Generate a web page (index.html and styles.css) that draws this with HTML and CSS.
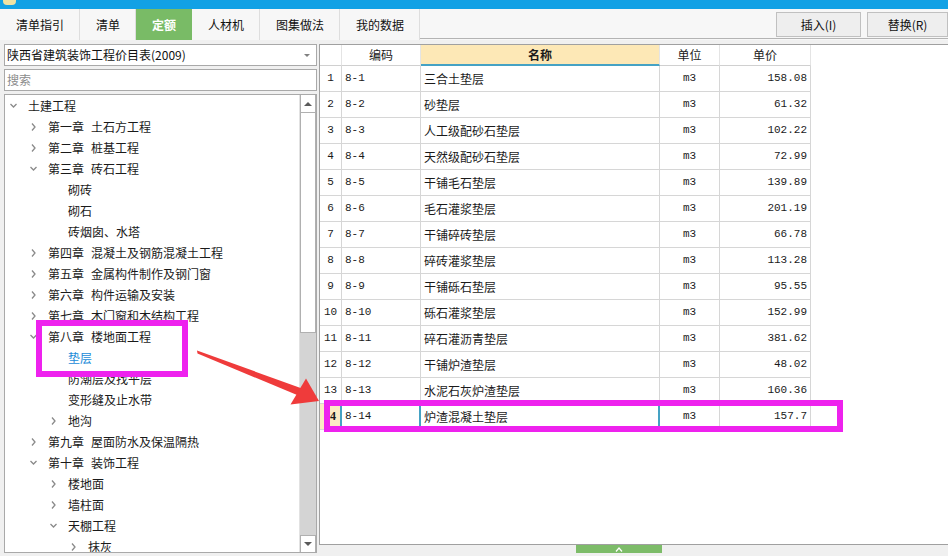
FILE: index.html
```html
<!DOCTYPE html>
<html lang="zh-CN">
<head>
<meta charset="utf-8">
<title>定额</title>
<link rel="stylesheet" href="styles.css">
</head>
<body>
<div class="titlebar"><span class="appicon"></span></div>
<div class="toolbar">
  <div class="tabs">
    <div class="tab">清单指引</div>
    <div class="tab">清单</div>
    <div class="tab active">定额</div>
    <div class="tab">人材机</div>
    <div class="tab">图集做法</div>
    <div class="tab">我的数据</div>
  </div>
  <div class="actions">
    <button class="btn btn-insert">插入(I)</button>
    <button class="btn btn-replace">替换(R)</button>
  </div>
</div>
<div class="main">
  <div class="left">
    <div class="select"><span>陕西省建筑装饰工程价目表(2009)</span><span class="caret"></span></div>
    <div class="search">搜索</div>
    <div class="tree">
      <div class="tree-list">
        <div class="node l0"><span class="chev"><svg viewBox="0 0 8 8"><polyline points="0.5,2 3.5,5 6.5,2"/></svg></span>土建工程</div>
        <div class="node l1"><span class="chev"><svg viewBox="0 0 8 8"><polyline points="2,0.5 5,4 2,7.5"/></svg></span><span class="ch">第一章</span>土石方工程</div>
        <div class="node l1"><span class="chev"><svg viewBox="0 0 8 8"><polyline points="2,0.5 5,4 2,7.5"/></svg></span><span class="ch">第二章</span>桩基工程</div>
        <div class="node l1"><span class="chev"><svg viewBox="0 0 8 8"><polyline points="0.5,2 3.5,5 6.5,2"/></svg></span><span class="ch">第三章</span>砖石工程</div>
        <div class="node l2"><span class="chev"></span>砌砖</div>
        <div class="node l2"><span class="chev"></span>砌石</div>
        <div class="node l2"><span class="chev"></span>砖烟囱、水塔</div>
        <div class="node l1"><span class="chev"><svg viewBox="0 0 8 8"><polyline points="2,0.5 5,4 2,7.5"/></svg></span><span class="ch">第四章</span>混凝土及钢筋混凝土工程</div>
        <div class="node l1"><span class="chev"><svg viewBox="0 0 8 8"><polyline points="2,0.5 5,4 2,7.5"/></svg></span><span class="ch">第五章</span>金属构件制作及钢门窗</div>
        <div class="node l1"><span class="chev"><svg viewBox="0 0 8 8"><polyline points="2,0.5 5,4 2,7.5"/></svg></span><span class="ch">第六章</span>构件运输及安装</div>
        <div class="node l1"><span class="chev"><svg viewBox="0 0 8 8"><polyline points="2,0.5 5,4 2,7.5"/></svg></span><span class="ch">第七章</span>木门窗和木结构工程</div>
        <div class="node l1"><span class="chev"><svg viewBox="0 0 8 8"><polyline points="0.5,2 3.5,5 6.5,2"/></svg></span><span class="ch">第八章</span>楼地面工程</div>
        <div class="node l2 selected"><span class="chev"></span>垫层</div>
        <div class="node l2"><span class="chev"></span>防潮层及找平层</div>
        <div class="node l2"><span class="chev"></span>变形缝及止水带</div>
        <div class="node l2"><span class="chev"><svg viewBox="0 0 8 8"><polyline points="2,0.5 5,4 2,7.5"/></svg></span>地沟</div>
        <div class="node l1"><span class="chev"><svg viewBox="0 0 8 8"><polyline points="2,0.5 5,4 2,7.5"/></svg></span><span class="ch">第九章</span>屋面防水及保温隔热</div>
        <div class="node l1"><span class="chev"><svg viewBox="0 0 8 8"><polyline points="0.5,2 3.5,5 6.5,2"/></svg></span><span class="ch">第十章</span>装饰工程</div>
        <div class="node l2"><span class="chev"><svg viewBox="0 0 8 8"><polyline points="2,0.5 5,4 2,7.5"/></svg></span>楼地面</div>
        <div class="node l2"><span class="chev"><svg viewBox="0 0 8 8"><polyline points="2,0.5 5,4 2,7.5"/></svg></span>墙柱面</div>
        <div class="node l2"><span class="chev"><svg viewBox="0 0 8 8"><polyline points="0.5,2 3.5,5 6.5,2"/></svg></span>天棚工程</div>
        <div class="node l3"><span class="chev"><svg viewBox="0 0 8 8"><polyline points="2,0.5 5,4 2,7.5"/></svg></span>抹灰</div>
      </div>
      <div class="scrollbar">
        <div class="sb-btn"><span class="tri-up"></span></div>
        <div class="sb-thumb"></div>
        <div class="sb-track"></div>
        <div class="sb-btn sb-down"><span class="tri-down"></span></div>
      </div>
    </div>
  </div>
  <div class="right">
    <div class="panel">
      <div class="grid">
        <div class="grow ghead"><div class="c rn"></div><div class="c">编码</div><div class="c hl">名称</div><div class="c">单位</div><div class="c">单价</div></div>
        <div class="grow"><div class="c rn">1</div><div class="c code">8-1</div><div class="c">三合土垫层</div><div class="c unit">m3</div><div class="c price">158.08</div></div>
        <div class="grow"><div class="c rn">2</div><div class="c code">8-2</div><div class="c">砂垫层</div><div class="c unit">m3</div><div class="c price">61.32</div></div>
        <div class="grow"><div class="c rn">3</div><div class="c code">8-3</div><div class="c">人工级配砂石垫层</div><div class="c unit">m3</div><div class="c price">102.22</div></div>
        <div class="grow"><div class="c rn">4</div><div class="c code">8-4</div><div class="c">天然级配砂石垫层</div><div class="c unit">m3</div><div class="c price">72.99</div></div>
        <div class="grow"><div class="c rn">5</div><div class="c code">8-5</div><div class="c">干铺毛石垫层</div><div class="c unit">m3</div><div class="c price">139.89</div></div>
        <div class="grow"><div class="c rn">6</div><div class="c code">8-6</div><div class="c">毛石灌浆垫层</div><div class="c unit">m3</div><div class="c price">201.19</div></div>
        <div class="grow"><div class="c rn">7</div><div class="c code">8-7</div><div class="c">干铺碎砖垫层</div><div class="c unit">m3</div><div class="c price">66.78</div></div>
        <div class="grow"><div class="c rn">8</div><div class="c code">8-8</div><div class="c">碎砖灌浆垫层</div><div class="c unit">m3</div><div class="c price">113.28</div></div>
        <div class="grow"><div class="c rn">9</div><div class="c code">8-9</div><div class="c">干铺砾石垫层</div><div class="c unit">m3</div><div class="c price">95.55</div></div>
        <div class="grow"><div class="c rn">10</div><div class="c code">8-10</div><div class="c">砾石灌浆垫层</div><div class="c unit">m3</div><div class="c price">152.99</div></div>
        <div class="grow"><div class="c rn">11</div><div class="c code">8-11</div><div class="c">碎石灌沥青垫层</div><div class="c unit">m3</div><div class="c price">381.62</div></div>
        <div class="grow"><div class="c rn">12</div><div class="c code">8-12</div><div class="c">干铺炉渣垫层</div><div class="c unit">m3</div><div class="c price">48.02</div></div>
        <div class="grow"><div class="c rn">13</div><div class="c code">8-13</div><div class="c">水泥石灰炉渣垫层</div><div class="c unit">m3</div><div class="c price">160.36</div></div>
        <div class="grow cur"><div class="c rn">14</div><div class="c code">8-14</div><div class="c name">炉渣混凝土垫层</div><div class="c unit">m3</div><div class="c price">157.7</div></div>
      </div>
    </div>
    <div class="handle-row"><div class="handle"><svg viewBox="0 0 8 5"><polyline points="1,4.5 4,1 7,4.5"/></svg></div></div>
  </div>
</div>
<div class="mark mark-tree"></div>
<div class="mark mark-row"></div>
<svg class="arrow" viewBox="0 0 948 556">
  <polygon points="197,350.5 302,388.5 299.5,396 197.5,353.5"/>
  <polygon points="306,378.5 319,401 290.5,404.5"/>
</svg>
</body>
</html>
```

FILE: styles.css
```css
html, body {
  margin: 0;
  padding: 0;
}
body {
  width: 948px;
  height: 556px;
  overflow: hidden;
  position: relative;
  background: #f0f0f0;
  color: #1a1a1a;
  font-family: "Noto Sans CJK SC", "Noto Sans", sans-serif;
  font-size: 12px;
  line-height: 16px;
}

/* title bar */
.titlebar {
  height: 9px;
  background: #12a1e5;
  overflow: hidden;
}
.appicon {
  display: block;
  margin-left: 3px;
  width: 13px;
  height: 5px;
  background: #efe3a4;
  border-radius: 0 0 4px 4px;
}

/* toolbar */
.toolbar {
  display: flex;
  height: 31px;
  background: #f7f7f7;
}
.tabs {
  display: flex;
}
.tab {
  padding: 0 15px 0 16px;
  line-height: 31px;
  border-right: 1px solid #dedede;
  color: #111;
}
.tab.active {
  background: #79bb66;
  color: #fff;
  font-weight: bold;
  border-right-color: #79bb66;
}
.actions {
  flex: 1;
  display: flex;
  justify-content: flex-end;
  align-items: flex-start;
  gap: 6px;
  padding-top: 3px;
  box-sizing: border-box;
  border-bottom: 1px solid #b4b4b4;
  height: 30px;
}
.btn {
  height: 25px;
  margin: 0;
  padding: 0;
  background: #eeeeee;
  border: 1px solid #c0c0c0;
  font-family: "Noto Sans CJK SC", sans-serif;
  font-size: 12px;
  color: #111;
}
.btn-insert { width: 85px; }
.btn-replace { width: 81px; }

/* main */
.main {
  display: flex;
  gap: 2px;
  height: 516px;
  box-sizing: border-box;
  padding: 4px 0 3px 4px;
}
.left {
  width: 313px;
  display: flex;
  flex-direction: column;
  gap: 3px;
}
.select, .search {
  height: 22px;
  box-sizing: border-box;
  border: 1px solid #a9a9a9;
  background: #fff;
  line-height: 20px;
  padding: 0 6px 0 2px;
}
.select {
  display: flex;
  justify-content: space-between;
  align-items: center;
  color: #111;
}
.caret {
  width: 0;
  height: 0;
  border-left: 3px solid transparent;
  border-right: 3px solid transparent;
  border-top: 3px solid #808080;
}
.search {
  color: #8c8c8c;
}
.tree {
  flex: 1;
  display: flex;
  border: 1px solid #a9a9a9;
  background: #fff;
  overflow: hidden;
}
.tree-list {
  flex: 1;
  overflow: hidden;
  padding-left: 3px;
}
.node {
  display: flex;
  align-items: center;
  height: 21px;
  line-height: 21px;
  white-space: nowrap;
  color: #1a1a1a;
}
.node.l1 { padding-left: 20px; }
.node.l2 { padding-left: 40px; }
.node.l3 { padding-left: 60px; }
.node.selected { color: #1a8bd8; }
.chev {
  width: 20px;
  flex: none;
  display: flex;
  align-items: center;
}
.chev svg {
  width: 8px;
  height: 8px;
  margin-left: 2px;
  fill: none;
  stroke: #8a8a8a;
  stroke-width: 1.3;
}
.ch {
  margin-right: 7px;
}

/* scrollbar */
.scrollbar {
  width: 16px;
  display: flex;
  flex-direction: column;
  border-left: 1px solid #e2e2e2;
}
.sb-btn {
  height: 18px;
  box-sizing: border-box;
  border: 1px solid #b0b0b0;
  border-top: none;
  background: #fff;
  display: flex;
  align-items: center;
  justify-content: center;
}
.sb-down {
  height: 17px;
  border-top: 1px solid #b0b0b0;
  border-bottom: none;
}
.tri-up, .tri-down {
  width: 0;
  height: 0;
  border-left: 4px solid transparent;
  border-right: 4px solid transparent;
}
.tri-up { border-bottom: 4px solid #5a5a5a; }
.tri-down { border-top: 4px solid #5a5a5a; }
.sb-thumb {
  height: 220px;
  box-sizing: border-box;
  background: #fff;
  border: 1px solid #b0b0b0;
  border-top: none;
}
.sb-track {
  flex: 1;
  background: #d4d4d4;
}

/* right panel */
.right {
  flex: 1;
  display: flex;
  flex-direction: column;
}
.panel {
  flex: 1;
  background: #fff;
  border: 1px solid #a0a0a0;
  border-right: none;
  overflow: hidden;
}
.grid {
  width: 491px;
}
.grow {
  display: grid;
  grid-template-columns: 22px 79px 239px 60px 91px;
  height: 26px;
}
.c {
  box-sizing: border-box;
  border-right: 1px solid #d6d6d6;
  border-bottom: 1px solid #d6d6d6;
  line-height: 25px;
  padding: 0 3px;
  white-space: nowrap;
  overflow: hidden;
}
.ghead {
  height: 21px;
}
.ghead .c {
  line-height: 20px;
  text-align: center;
  border-right-color: #e4e4e4;
  border-bottom-color: #d0d0d0;
}
.ghead .hl {
  background: #fde8b6;
  font-weight: bold;
  border-bottom: 2px solid #45a2c4;
  line-height: 19px;
}
.rn {
  padding: 0;
  text-align: center;
  font-family: "Liberation Mono", monospace;
  font-size: 11px;
}
.code, .unit, .price {
  font-family: "Liberation Mono", monospace;
  font-size: 11px;
}
.unit { text-align: center; }
.price { text-align: right; }
.cur .rn {
  background: #fcebc4;
  font-family: "Liberation Serif", serif;
  font-weight: bold;
  font-size: 12px;
  border-right: 2px solid #45a2c4;
}
.cur .code {
  border-right: 2px solid #45a2c4;
}
.cur .name {
  border-right: 2px solid #45a2c4;
}

.handle-row {
  height: 8px;
  padding-left: 257px;
}
.handle {
  width: 86px;
  height: 8px;
  background: #7dbc69;
  display: flex;
  justify-content: center;
  align-items: center;
}
.handle svg {
  width: 8px;
  height: 5px;
  fill: none;
  stroke: #fff;
  stroke-width: 1.2;
}

/* annotations */
.mark {
  position: absolute;
  box-sizing: border-box;
  border: 6px solid #ee22ee;
  pointer-events: none;
}
.mark-tree {
  left: 36px;
  top: 320px;
  width: 152px;
  height: 57px;
}
.mark-row {
  left: 324px;
  top: 400px;
  width: 519px;
  height: 32px;
}
.arrow {
  position: absolute;
  left: 0;
  top: 0;
  width: 948px;
  height: 556px;
  fill: #ef3b3b;
  pointer-events: none;
}
```
